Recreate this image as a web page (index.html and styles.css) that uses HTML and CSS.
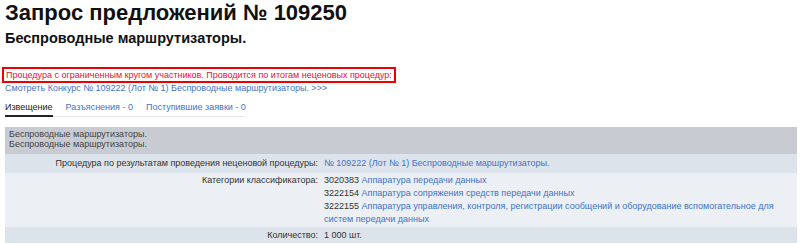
FILE: index.html
```html
<!DOCTYPE html>
<html lang="ru">
<head>
<meta charset="utf-8">
<link rel="stylesheet" href="styles.css">
</head>
<body>
<div class="page">
  <h1 class="title">Запрос предложений № 109250</h1>
  <h2 class="subtitle">Беспроводные маршрутизаторы.</h2>
  <div class="notice">Процедура с ограниченным кругом участников. Проводится по итогам неценовых процедур:</div>
  <a class="link see" href="#">Смотреть Конкурс № 109222 (Лот № 1) Беспроводные маршрутизаторы. &gt;&gt;&gt;</a>
  <div class="tabs">
    <span class="tab active">Извещение</span>
    <a class="tab" href="#">Разъяснения - 0</a>
    <a class="tab" href="#">Поступившие заявки - 0</a>
  </div>
  <table class="info">
    <tr class="head"><td colspan="2">Беспроводные маршрутизаторы.<br>Беспроводные маршрутизаторы.</td></tr>
    <tr class="odd first">
      <td class="label">Процедура по результатам проведения неценовой процедуры:</td>
      <td class="value"><a href="#">№ 109222 (Лот № 1) Беспроводные маршрутизаторы.</a></td>
    </tr>
    <tr class="even">
      <td class="label">Категории классификатора:</td>
      <td class="value">
        <div>3020383 <a href="#">Аппаратура передачи данных</a></div>
        <div>3222154 <a href="#">Аппаратура сопряжения средств передачи данных</a></div>
        <div>3222155 <a href="#">Аппаратура управления, контроля, регистрации сообщений и оборудование вспомогательное для систем передачи данных</a></div>
      </td>
    </tr>
    <tr class="odd last">
      <td class="label">Количество:</td>
      <td class="value">1 000 шт.</td>
    </tr>
  </table>
</div>
</body>
</html>
```
FILE: styles.css
```css
* { box-sizing: border-box; }
body {
  margin: 0;
  font-family: "Liberation Sans", Arial, sans-serif;
  font-size: 9px;
  color: #333;
  background: #fff;
}
.page { padding: 0 3px 0 5px; }
a { color: #3f74c6; text-decoration: none; }
.title {
  margin: 0;
  font-size: 22px;
  line-height: 26px;
  font-weight: bold;
  color: #111;
}
.subtitle {
  margin: 3px 0 0;
  font-size: 14.5px;
  line-height: 18px;
  font-weight: bold;
  color: #111;
}
.notice {
  display: inline-block;
  margin: 20px 0 0 -3px;
  border: 2px solid #ee0000;
  padding: 0 2px;
  line-height: 12px;
  color: #e3122f;
}
.see {
  display: block;
  line-height: 11px;
}
.tabs {
  display: flex;
  width: max-content;
  margin-top: 6px;
  border-bottom: 1px solid #e6e6e6;
  white-space: nowrap;
}
.tab {
  padding: 1px 0 2px 1px;
  margin-right: 12px;
  line-height: 12px;
  border-bottom: 2px solid transparent;
  margin-bottom: -1px;
}
.tab:last-child { margin-right: 0; }
.tab.active { color: #222; border-bottom-color: #222; padding-left: 0; }
.info {
  margin-top: 10px;
  width: 792px;
  border-collapse: collapse;
}
.info td { padding: 0 3px; vertical-align: top; line-height: 11px; }
.head td {
  background: #c8ccd2;
  padding: 2px 4px 5px;
  line-height: 10px;
  color: #444;
}
.first td { background: #dde3ea; padding-top: 4px; padding-bottom: 4px; }
.even td { background: #eceff3; padding-top: 1px; padding-bottom: 1px; }
.even .label { padding-top: 2px; }
.last td { background: #dde3ea; padding-top: 3px; padding-bottom: 2px; }
.label { width: 316px; text-align: right; }
.even .value div { line-height: 13px; }
```
